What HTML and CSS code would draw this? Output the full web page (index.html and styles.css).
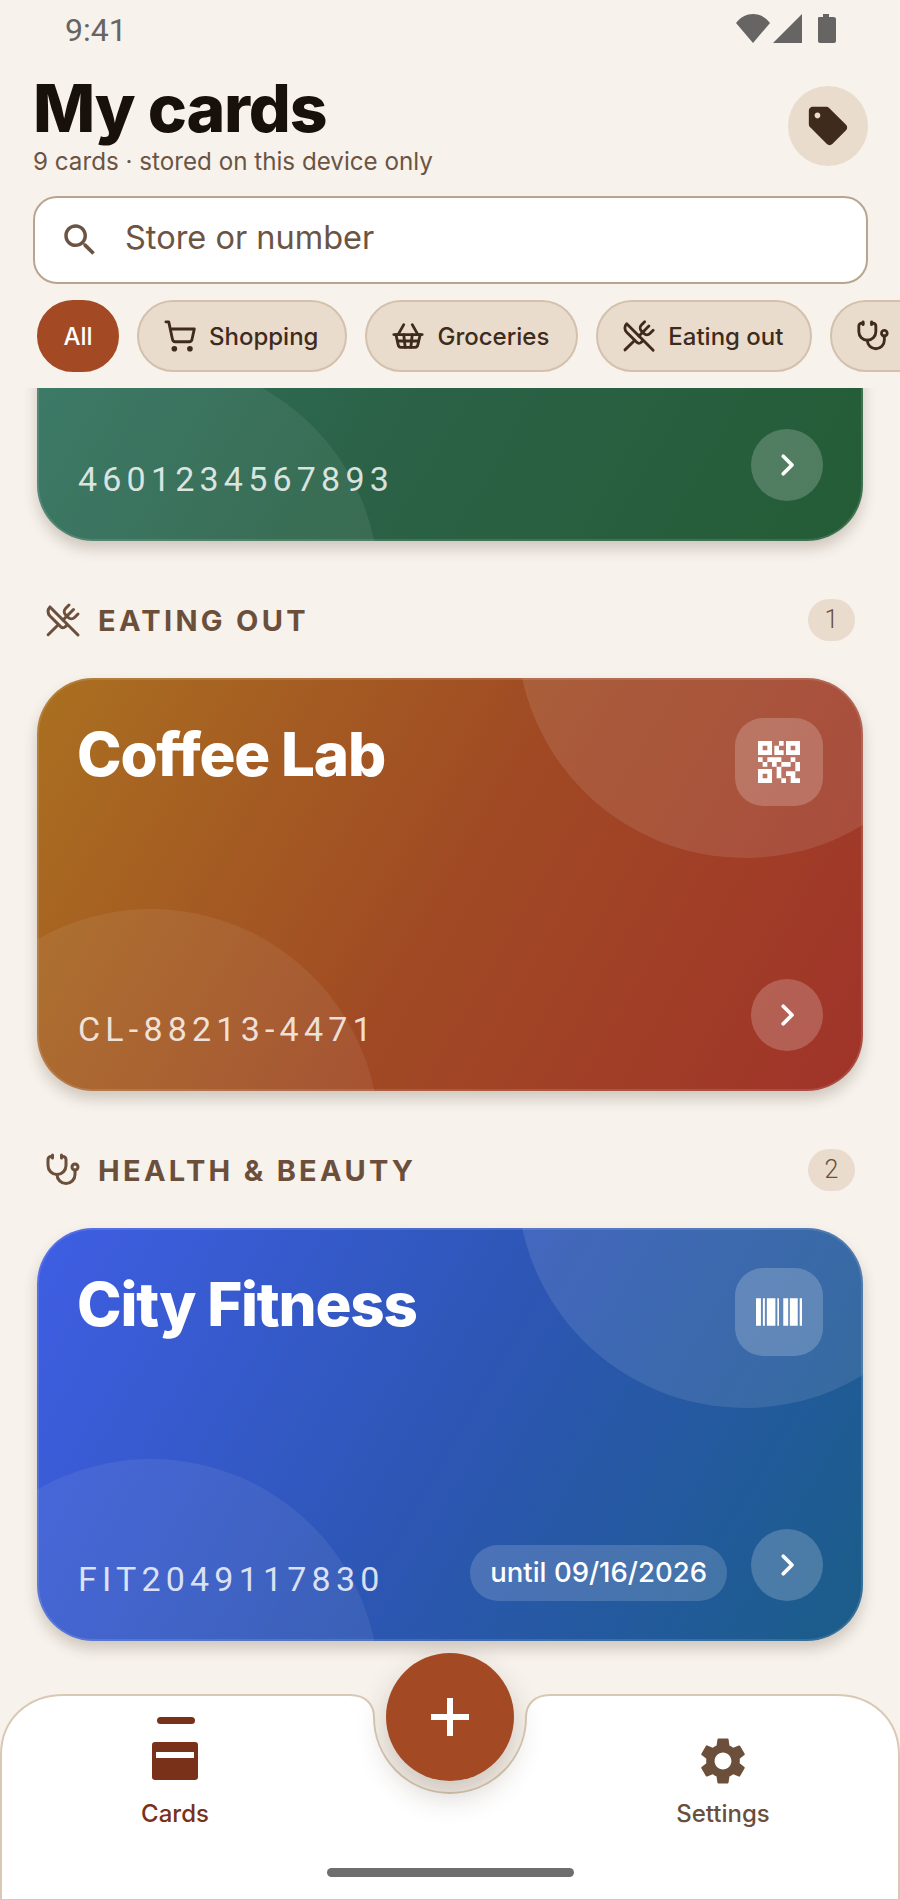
FILE: index.html
```html
<!DOCTYPE html>
<html>
<head>
  <title>My cards</title>
  <link rel="stylesheet" href="styles.css">
</head>
<body>
<div class="screen">

  <div class="status-bar">
    <span class="time">9:41</span>
    <svg class="status-icons" width="100" height="29" viewBox="0 0 100 29">
      <path d="M0 9 C9 -3 25 -3 34 9 L17 29 Z"/>
      <path d="M37 29 L66 0 V29 Z"/>
      <path d="M82 4 Q82 3 83 3 H87 V0 H93 V3 H97 Q100 3 100 5 V27 Q100 29 98 29 H84 Q82 29 82 27 Z"/>
    </svg>
  </div>

  <header class="top">
    <div class="top-row">
      <div>
        <h1>My cards</h1>
        <p class="subtitle">9 cards · stored on this device only</p>
      </div>
      <div class="tag-btn">
        <svg width="46" height="46" viewBox="0 0 24 24"><path fill-rule="evenodd" d="M21.41 11.41l-8.83-8.83c-.37-.37-.88-.58-1.41-.58H4c-1.1 0-2 .9-2 2v7.17c0 .53.21 1.04.59 1.41l8.83 8.83c.78.78 2.05.78 2.83 0l7.17-7.17c.78-.78.78-2.04-.01-2.83zM6.5 8C5.67 8 5 7.33 5 6.5S5.67 5 6.5 5 8 5.67 8 6.5 7.33 8 6.5 8z"/></svg>
      </div>
    </div>

    <div class="search">
      <svg width="42" height="42" viewBox="0 0 24 24"><path d="M15.5 14h-.79l-.28-.27C15.41 12.59 16 11.11 16 9.5 16 5.91 13.09 3 9.5 3S3 5.91 3 9.5 5.91 16 9.5 16c1.61 0 3.09-.59 4.23-1.57l.27.28v.79l5 4.99L20.49 19l-4.99-5zm-6 0C7.01 14 5 11.99 5 9.5S7.01 5 9.5 5 14 7.01 14 9.5 11.99 14 9.5 14z"/></svg>
      <span class="search-text">Store or number</span>
    </div>

    <div class="chips">
      <div class="chip chip-active">All</div>
      <div class="chip">
        <svg class="line-icon" width="34" height="34" viewBox="0 0 24 24"><circle cx="8" cy="21" r="1"/><circle cx="19" cy="21" r="1"/><path d="M2.05 2.05h2l2.66 12.42a2 2 0 0 0 2 1.58h9.78a2 2 0 0 0 1.95-1.57l1.65-7.43H5.12"/></svg>
        Shopping
      </div>
      <div class="chip">
        <svg class="line-icon" width="34" height="34" viewBox="0 0 24 24"><path d="m15 11-1 9"/><path d="m19 11-4-7"/><path d="M2 11h20"/><path d="m3.5 11 1.6 7.4a2 2 0 0 0 2 1.6h9.8a2 2 0 0 0 2-1.6l1.7-7.4"/><path d="M4.5 15.5h15"/><path d="m5 11 4-7"/><path d="m9 11 1 9"/></svg>
        Groceries
      </div>
      <div class="chip">
        <svg class="line-icon" width="34" height="34" viewBox="0 0 24 24"><path d="m16 2-2.3 2.3a3 3 0 0 0 0 4.2l1.8 1.8a3 3 0 0 0 4.2 0L22 8"/><path d="M15 15 3.3 3.3a4.2 4.2 0 0 0 0 6l7.3 7.3c.7.7 2 .7 2.8 0L15 15Zm0 0 7 7"/><path d="m2.1 21.8 6.4-6.3"/><path d="m19 5-7 7"/></svg>
        Eating out
      </div>
      <div class="chip">
        <svg class="line-icon" width="34" height="34" viewBox="0 0 24 24"><path d="M11 2v2"/><path d="M5 2v2"/><path d="M5 3H4a2 2 0 0 0-2 2v4a6 6 0 0 0 12 0V5a2 2 0 0 0-2-2h-1"/><path d="M8 15a6 6 0 0 0 12 0v-3"/><circle cx="20" cy="10" r="2"/></svg>
        Health &amp; beauty
      </div>
    </div>
  </header>

  <main class="list">

    <!-- first card is scrolled, only its lower part shows -->
    <article class="card card-green card-scrolled">
      <div class="blob blob-top"></div>
      <div class="blob blob-bottom"></div>
      <div class="card-head">
        <div class="card-title">Grocery Mart</div>
      </div>
      <div class="card-foot">
        <span class="number">4601234567893</span>
        <div class="card-foot-right">
          <div class="arrow"><svg width="30" height="30" viewBox="0 0 24 24"><path d="m9 5 7 7-7 7"/></svg></div>
        </div>
      </div>
    </article>

    <div class="section-head">
      <svg class="line-icon" width="36" height="36" viewBox="0 0 24 24"><path d="m16 2-2.3 2.3a3 3 0 0 0 0 4.2l1.8 1.8a3 3 0 0 0 4.2 0L22 8"/><path d="M15 15 3.3 3.3a4.2 4.2 0 0 0 0 6l7.3 7.3c.7.7 2 .7 2.8 0L15 15Zm0 0 7 7"/><path d="m2.1 21.8 6.4-6.3"/><path d="m19 5-7 7"/></svg>
      <span class="section-title">EATING OUT</span>
      <span class="count">1</span>
    </div>

    <article class="card card-orange">
      <div class="blob blob-top"></div>
      <div class="blob blob-bottom"></div>
      <div class="card-head">
        <div class="card-title">Coffee Lab</div>
        <div class="code-btn">
          <svg width="56" height="56" viewBox="0 0 24 24"><path fill-rule="evenodd" d="M15 21h-2v-2h2v2zM13 14h-2v5h2v-5zM21 12h-2v4h2v-4zM19 10h-2v2h2v-2zM7 12H5v2h2v-2zM5 10H3v2h2v-2zM12 5h2V3h-2v2zM5 5v2h2V5H5zM9 9H3V3h6v6zM5 17v2h2v-2H5zM9 21H3v-6h6v6zM17 5v2h2V5h-2zM21 9h-6V3h6v6zM19 19v-3h-4v2h2v3h4v-2h-2zM17 12h-4v2h4v-2zM13 10H7v2h2v2h2v-2h2v-2zM14 9V7h-2V5h-2v4h4z"/></svg>
        </div>
      </div>
      <div class="card-foot">
        <span class="number">CL-88213-4471</span>
        <div class="card-foot-right">
          <div class="arrow"><svg width="30" height="30" viewBox="0 0 24 24"><path d="m9 5 7 7-7 7"/></svg></div>
        </div>
      </div>
    </article>

    <div class="section-head">
      <svg class="line-icon" width="36" height="36" viewBox="0 0 24 24"><path d="M11 2v2"/><path d="M5 2v2"/><path d="M5 3H4a2 2 0 0 0-2 2v4a6 6 0 0 0 12 0V5a2 2 0 0 0-2-2h-1"/><path d="M8 15a6 6 0 0 0 12 0v-3"/><circle cx="20" cy="10" r="2"/></svg>
      <span class="section-title">HEALTH &amp; BEAUTY</span>
      <span class="count">2</span>
    </div>

    <article class="card card-blue">
      <div class="blob blob-top"></div>
      <div class="blob blob-bottom"></div>
      <div class="card-head">
        <div class="card-title">City Fitness</div>
        <div class="code-btn">
          <svg width="46" height="28" viewBox="0 0 140 84"><path d="M0 0h15v84H0zM21 0h6v84h-6zM33 0h26v84H33zM65 0h5v84h-5zM83 0h15v84H83zM103 0h24v84h-24zM133 0h7v84h-7z"/></svg>
        </div>
      </div>
      <div class="card-foot">
        <span class="number">FIT2049117830</span>
        <div class="card-foot-right">
          <span class="until">until 09/16/2026</span>
          <div class="arrow"><svg width="30" height="30" viewBox="0 0 24 24"><path d="m9 5 7 7-7 7"/></svg></div>
        </div>
      </div>
    </article>

  </main>

  <nav class="bottom-nav">
    <svg class="nav-shape" width="900" height="207" viewBox="0 0 900 207">
      <path d="M1 207 V62 C1 26 28 2 64 2 H350 C366 2 374 12 374 24 A76 76 0 0 0 526 24 C526 12 534 2 550 2 H836 C872 2 899 26 899 62 V207 Z"/>
    </svg>
    <div class="fab"><svg width="40" height="40" viewBox="0 0 40 40"><path d="M17 1h6v16h16v6H23v16h-6V23H1v-6h16z"/></svg></div>
    <div class="nav-items">
      <div class="nav-item nav-item-active">
        <svg width="46" height="63" viewBox="0 0 46 63">
          <rect x="5" y="0" width="38" height="7" rx="3.5"/>
          <path fill-rule="evenodd" d="M3 25H43Q46 25 46 28V60Q46 63 43 63H3Q0 63 0 60V28Q0 25 3 25ZM4 35V41H42V35Z"/>
        </svg>
        <span>Cards</span>
      </div>
      <div class="nav-item">
        <svg class="gear" width="56" height="56" viewBox="0 0 24 24"><path d="M19.14 12.94c.04-.3.06-.61.06-.94 0-.32-.02-.64-.07-.94l2.03-1.58c.18-.14.23-.41.12-.61l-1.92-3.32c-.12-.22-.37-.29-.59-.22l-2.39.96c-.5-.38-1.03-.7-1.62-.94l-.36-2.54c-.04-.24-.24-.41-.48-.41h-3.84c-.24 0-.43.17-.47.41l-.36 2.54c-.59.24-1.13.57-1.62.94l-2.39-.96c-.22-.08-.47 0-.59.22L2.74 8.87c-.12.21-.08.47.12.61l2.03 1.58c-.05.3-.09.63-.09.94s.02.64.07.94l-2.03 1.58c-.18.14-.23.41-.12.61l1.92 3.32c.12.22.37.29.59.22l2.39-.96c.5.38 1.03.7 1.62.94l.36 2.54c.05.24.24.41.48.41h3.84c.24 0 .44-.17.47-.41l.36-2.54c.59-.24 1.13-.56 1.62-.94l2.39.96c.22.08.47 0 .59-.22l1.92-3.32c.12-.22.07-.47-.12-.61l-2.01-1.58zM12 15.6c-1.98 0-3.6-1.62-3.6-3.6s1.62-3.6 3.6-3.6 3.6 1.62 3.6 3.6-1.62 3.6-3.6 3.6z"/></svg>
        <span>Settings</span>
      </div>
    </div>
    <div class="home-bar"></div>
  </nav>

</div>
</body>
</html>
```

FILE: styles.css
```css
* {
  box-sizing: border-box;
}
body {
  margin: 0;
  background: #f7f2ec;
  font-family: Inter, "Noto Sans", sans-serif;
  color: #2e2015;
}
.screen {
  position: relative;
  width: 900px;
  height: 1900px;
  overflow: hidden;
  display: flex;
  flex-direction: column;
}

/* status bar */
.status-bar {
  height: 60px;
  flex: none;
  display: flex;
  justify-content: space-between;
  align-items: center;
  padding: 0 64px 0 65px;
}
.time {
  font-family: Roboto, sans-serif;
  font-size: 32px;
  color: #666563;
}
.status-icons {
  fill: #666563;
  margin-top: -3px;
}

/* header */
.top {
  flex: none;
  padding: 0 32px 0 33px;
}
.top-row {
  display: flex;
  justify-content: space-between;
  align-items: flex-start;
  height: 136px;
}
h1 {
  margin: 14px 0 0;
  font-size: 66px;
  line-height: 68px;
  font-weight: 800;
  letter-spacing: -1.2px;
  color: #17100b;
}
.subtitle {
  margin: 5px 0 0;
  font-size: 24.2px;
  line-height: 30px;
  color: #6b5443;
}
.tag-btn {
  width: 80px;
  height: 80px;
  margin-top: 26px;
  border-radius: 50%;
  background: #e9dccd;
  display: flex;
  align-items: center;
  justify-content: center;
  fill: #3f2b1c;
}
.search {
  height: 88px;
  border: 2px solid #b9a58f;
  border-radius: 24px;
  background: #fff;
  display: flex;
  align-items: center;
  padding-left: 24px;
  gap: 24px;
  fill: #6b5443;
  font-size: 32.5px;
  color: #6b5443;
}
.search-text {
  margin-top: -5px;
}
.chips {
  display: flex;
  gap: 18px;
  margin: 16px -33px 0 4px;
  height: 72px;
  white-space: nowrap;
}
.chip {
  flex: none;
  height: 72px;
  padding: 0 27px 0 24px;
  border: 2px solid #d3c1ab;
  border-radius: 36px;
  background: #e9dccd;
  display: flex;
  align-items: center;
  gap: 12px;
  font-size: 24px;
  font-weight: 500;
  color: #3f2b1c;
}
.chip-active {
  width: 82px;
  padding: 0;
  justify-content: center;
  background: #a34a25;
  border-color: #a34a25;
  color: #fff;
}
.line-icon {
  flex: none;
  fill: none;
  stroke: currentColor;
  stroke-width: 2;
  stroke-linecap: round;
  stroke-linejoin: round;
}

/* card list */
.list {
  flex: 1;
  min-height: 0;
  margin-top: 16px;
  padding: 0 37px;
  overflow: hidden;
}
.card {
  position: relative;
  height: 413px;
  border-radius: 56px;
  overflow: hidden;
  padding: 40px 40px 0 41px;
  display: flex;
  flex-direction: column;
  justify-content: space-between;
  color: #fff;
  box-shadow: 0 8px 14px rgba(70, 50, 30, 0.22), inset 0 0 0 2px rgba(255, 255, 255, 0.12);
}
.card-scrolled {
  margin-top: -260px;
}
.card-green {
  background: linear-gradient(120deg, #2f7564 0%, #2b6247 50%, #245c36 100%);
}
.card-orange {
  background: linear-gradient(120deg, #aa7020 0%, #a04a24 50%, #a0332a 100%);
}
.card-blue {
  background: linear-gradient(120deg, #3f5ee4 0%, #2d56b4 50%, #1a5d88 100%);
}
.blob {
  position: absolute;
  width: 456px;
  height: 456px;
  border-radius: 50%;
}
.blob-top {
  left: 480px;
  top: -276px;
  background: rgba(255, 255, 255, 0.1);
}
.blob-bottom {
  left: -114px;
  top: 231px;
  background: rgba(255, 255, 255, 0.07);
}
.card-head,
.card-foot {
  position: relative;
  display: flex;
  justify-content: space-between;
}
.card-title {
  margin: 2px 0 0 -1px;
  font-size: 60px;
  line-height: 68px;
  font-weight: 800;
  letter-spacing: -1.2px;
}
.code-btn {
  width: 88px;
  height: 88px;
  border-radius: 28px;
  background: rgba(255, 255, 255, 0.2);
  display: flex;
  align-items: center;
  justify-content: center;
  fill: #fff;
}
.card-foot {
  align-items: flex-end;
  height: 112px;
  padding-bottom: 43px;
}
.number {
  font-family: Roboto, sans-serif;
  font-size: 34px;
  line-height: 38px;
  letter-spacing: 5.2px;
  color: rgba(255, 255, 255, 0.82);
}
.card-foot-right {
  position: absolute;
  right: 0;
  top: 0;
  display: flex;
  align-items: flex-start;
  gap: 24px;
}
.arrow {
  width: 72px;
  height: 72px;
  border-radius: 50%;
  background: rgba(255, 255, 255, 0.2);
  display: flex;
  align-items: center;
  justify-content: center;
  fill: none;
  stroke: #fff;
  stroke-width: 3;
  stroke-linecap: round;
  stroke-linejoin: round;
}
.until {
  height: 56px;
  margin-top: 16px;
  padding: 0 20px;
  border-radius: 28px;
  background: rgba(255, 255, 255, 0.16);
  font-size: 27.5px;
  line-height: 54px;
  font-weight: 500;
}

/* section headers */
.section-head {
  display: flex;
  align-items: center;
  height: 42px;
  margin: 58px 8px 37px;
  color: #6b4f3a;
}
.section-title {
  margin-left: 17px;
  font-size: 29px;
  font-weight: 700;
  letter-spacing: 3.3px;
}
.count {
  margin-left: auto;
  width: 47px;
  height: 42px;
  border-radius: 21px;
  background: #e9dccd;
  text-align: center;
  font-family: Roboto, sans-serif;
  font-size: 25px;
  font-weight: 300;
  line-height: 42px;
}

/* bottom navigation */
.bottom-nav {
  position: absolute;
  left: 0;
  right: 0;
  bottom: 0;
  height: 207px;
  padding-top: 24px;
}
.nav-shape {
  position: absolute;
  left: 0;
  top: 0;
  fill: #fff;
  stroke: #d9c9b4;
  stroke-width: 2;
}
.fab {
  position: absolute;
  left: 386px;
  top: -40px;
  width: 128px;
  height: 128px;
  border-radius: 50%;
  background: #a34a25;
  box-shadow: 0 14px 30px rgba(60, 40, 20, 0.22);
  display: flex;
  align-items: center;
  justify-content: center;
  fill: #fff;
}
.nav-items {
  position: relative;
  display: flex;
  justify-content: space-between;
  padding: 0 77px 0 75px;
  height: 112px;
}
.nav-item {
  width: 200px;
  display: flex;
  flex-direction: column;
  align-items: center;
  justify-content: flex-end;
  font-size: 24px;
  line-height: 30px;
  font-weight: 500;
  color: #6b4f3a;
  fill: #6b4f3a;
}
.nav-item-active {
  color: #7a3119;
  fill: #7a3119;
}
.nav-item-active svg {
  margin-bottom: 19px;
}
.gear {
  margin-bottom: 10px;
}
.home-bar {
  position: relative;
  width: 247px;
  height: 9px;
  margin: 39px auto 0;
  border-radius: 5px;
  background: #6e6e6e;
}
```
